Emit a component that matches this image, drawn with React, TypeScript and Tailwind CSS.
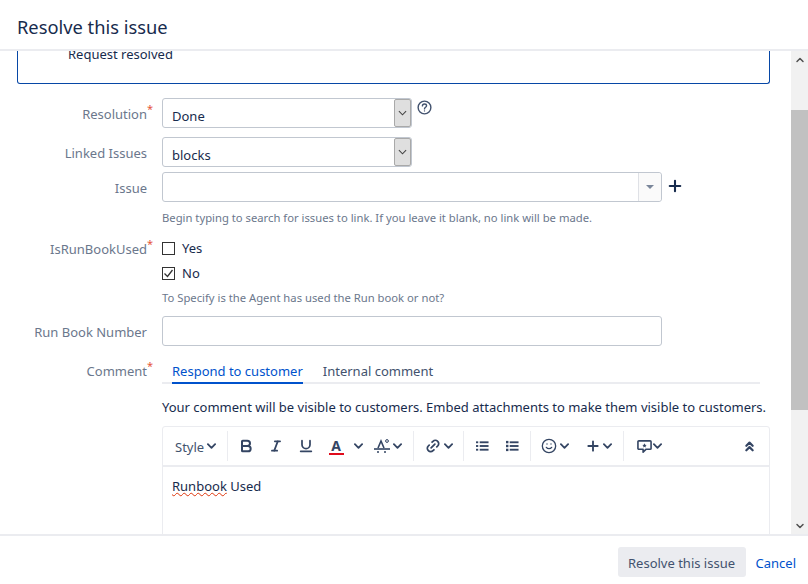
import React from "react";
import { Bold, Italic, Underline, Link2, Smile, Plus, ChevronDown, ChevronUp } from "lucide-react";

const Chev = ({ className = "" }: { className?: string }) => (
  <svg viewBox="0 0 10 6" className={"w-[9px] h-[6px] shrink-0 " + className} fill="none" stroke="#344563" strokeWidth="2" strokeLinecap="round" strokeLinejoin="round">
    <path d="M1 1l4 4 4-4" />
  </svg>
);
const Sep = ({ className = "" }: { className?: string }) => <div className={"w-[1px] h-[30px] bg-[#ebecf0] shrink-0 " + className} />;

const Label = ({ children, req, top = "" }: { children: React.ReactNode; req?: boolean; top?: string }) => (
  <div className={"w-[130px] shrink-0 text-right text-[13px] leading-[20px] text-[#6b778c] " + top}>
    <div className="relative">
      {children}
      {req && <span className="absolute right-[-6px] top-[-5px] text-[#e5553a] text-[11px]">*</span>}
    </div>
  </div>
);

const SelectBox = ({ value }: { value: string }) => (
  <div className="w-[250px] h-[30px] border border-[#c1c7d0] rounded-[3px] flex items-stretch bg-white">
    <div className="flex-1 pl-[9px] pt-[7px] text-[13px] leading-[20px] text-[#172b4d]">{value}</div>
    <div className="w-[17px] bg-[#dfdfdf] border border-[#a9a9a9] rounded-[2px] flex items-center justify-center">
      <svg viewBox="0 0 10 6" className="w-[9px] h-[6px]" fill="none" stroke="#444" strokeWidth="1.2"><path d="M1 1l4 4 4-4" /></svg>
    </div>
  </div>
);

export default function App() {
  return (
    <div className="w-[808px] h-[584px] bg-white flex flex-col overflow-hidden font-['Noto_Sans','Open_Sans',sans-serif] text-[#172b4d]">
      <div className="h-[51px] shrink-0 border-b-2 border-[#ebecf0] pl-[17px] pt-[13px] text-[18.3px] leading-[28px] text-[#172b4d]">Resolve this issue</div>

      <div className="flex-1 flex min-h-0">
        <div className="flex-1 overflow-hidden pl-[17px] pr-[21px]">
          <div className="h-[33px] flex border border-t-0 border-[#0747a6] rounded-b-[3px] pl-[50px] text-[13px]">
            <div className="leading-[18px] mt-[-6px]">Request resolved</div>
          </div>

          <div className="flex mt-[14px]">
            <Label req top="pt-[6px]">Resolution</Label>
            <div className="ml-[15px]"><SelectBox value="Done" /></div>
            <svg viewBox="0 0 16 16" className="w-[15px] h-[15px] ml-[5px] mt-[2px]" fill="none" stroke="#42526e" strokeWidth="1.5">
              <circle cx="8" cy="8" r="6.8" />
              <path d="M5.8 6.3c0-1.3 1-2 2.2-2s2.2.8 2.2 1.9c0 1.6-2.2 1.6-2.2 3.3" strokeLinecap="round" />
              <circle cx="8" cy="11.6" r=".7" fill="#42526e" stroke="none" />
            </svg>
          </div>

          <div className="flex mt-[9px]">
            <Label top="pt-[6px]">Linked Issues</Label>
            <div className="ml-[15px]"><SelectBox value="blocks" /></div>
          </div>

          <div className="flex mt-[5px]">
            <Label top="pt-[6px]">Issue</Label>
            <div className="ml-[15px] w-[500px] h-[30px] border border-[#c1c7d0] rounded-[3px] flex justify-end">
              <div className="w-[23px] border-l border-[#dfe1e6] bg-[#fafafa] rounded-r-[3px] flex items-center justify-center">
                <svg viewBox="0 0 8 4" className="w-[8px] h-[4px]"><path d="M0 0h8L4 4z" fill="#7a869a" /></svg>
              </div>
            </div>
            <Plus size={18} strokeWidth={2.8} color="#172b4d" className="ml-[4px] mt-[5px]" />
          </div>

          <div className="ml-[145px] mt-[8px] text-[11.25px] leading-[16px] text-[#6b778c]">Begin typing to search for issues to link. If you leave it blank, no link will be made.</div>

          <div className="flex mt-[12px]">
            <Label req top="pt-[1px]">IsRunBookUsed</Label>
            <div className="ml-[15px]">
              <div className="flex items-center h-[20px]">
                <div className="w-[13px] h-[13px] border border-[#333] bg-white" />
                <span className="ml-[7px] text-[13px] leading-[20px]">Yes</span>
              </div>
              <div className="flex items-center h-[20px] mt-[5px]">
                <div className="w-[13px] h-[13px] border border-[#333] bg-white flex items-center justify-center">
                  <svg viewBox="0 0 11 11" className="w-[11px] h-[11px]" fill="none" stroke="#333" strokeWidth="1.3"><path d="M1.5 5.5l3 3 5-6.5" /></svg>
                </div>
                <span className="ml-[7px] text-[13px] leading-[20px]">No</span>
              </div>
              <div className="mt-[7px] text-[11.25px] leading-[16px] text-[#6b778c]">To Specify is the Agent has used the Run book or not?</div>
            </div>
          </div>

          <div className="flex mt-[10px]">
            <Label top="pt-[6px]">Run Book Number</Label>
            <div className="ml-[15px] w-[500px] h-[30px] border border-[#c1c7d0] rounded-[3px]" />
          </div>

          <div className="flex mt-[14px]">
            <Label req top="pt-[1px]">Comment</Label>
            <div className="ml-[15px] flex-1 min-w-0">
              <div className="flex w-[598px] border-b-2 border-[#ebecf0] h-[24px] pl-[10px] pt-[1px]">
                <div className="h-[23px] border-b-2 border-[#0052cc] text-[#0052cc] text-[13px] leading-[20px]">Respond to customer</div>
                <div className="ml-[20px] text-[13px] leading-[20px] text-[#42526e]">Internal comment</div>
              </div>
              <div className="mt-[14px] text-[13px] leading-[18px] text-[#172b4d] whitespace-nowrap">Your comment will be visible to customers. Embed attachments to make them visible to customers.</div>

              <div className="mt-[10px] border border-[#ebecf0] rounded-t-[3px] h-[200px] w-[608px]">
                <div className="h-[40px] border-b-2 border-[#ebecf0] flex items-center text-[#42526e]">
                  <span className="ml-[12px] w-[30px] pt-[1px] text-[13px] leading-[20px] text-[#42526e]">Style</span>
                  <Chev className="ml-[2px]" />
                  <Sep className="ml-[11px]" />
                  <Bold size={16} strokeWidth={3} color="#344563" className="ml-[10px]" />
                  <Italic size={14} strokeWidth={3} color="#344563" className="ml-[15px]" />
                  <Underline size={16} strokeWidth={2.6} color="#344563" className="ml-[15px]" />
                  <div className="ml-[14px] w-[16px] flex flex-col items-center">
                    <span className="text-[14px] leading-[15px] font-bold text-[#344563]">A</span>
                    <div className="w-[15px] h-[2px] bg-[#e00b1c]" />
                  </div>
                  <Chev className="ml-[10px]" />
                  <svg viewBox="0 0 16 16" className="w-[16px] h-[16px] ml-[11px]" fill="none" stroke="#344563" strokeWidth="1.6">
                    <path d="M4 10l3-7 3 7" />
                    <circle cx="13" cy="3" r="1.4" strokeWidth="1" />
                    <path d="M0 11h16" />
                    <path d="M3 14h2M10 14h2" />
                  </svg>
                  <Chev className="ml-[3px]" />
                  <Sep className="ml-[11px]" />
                  <Link2 size={16} strokeWidth={2.6} color="#344563" className="ml-[11px] -rotate-45" />
                  <Chev className="ml-[3px]" />
                  <Sep className="ml-[10px]" />
                  <svg viewBox="0 0 14 12" className="w-[13px] h-[12px] ml-[12px]" fill="#344563">
                    <rect x="0" y="1" width="2.4" height="2" /><rect x="4" y="1" width="9.5" height="2" />
                    <rect x="0" y="5" width="2.4" height="2" /><rect x="4" y="5" width="9.5" height="2" />
                    <rect x="0" y="9" width="2.4" height="2" /><rect x="4" y="9" width="9.5" height="2" />
                  </svg>
                  <svg viewBox="0 0 14 12" className="w-[13px] h-[12px] ml-[17px]" fill="#344563">
                    <rect x="0" y="0.5" width="2.6" height="2.6" /><rect x="4" y="1" width="9.5" height="2" />
                    <rect x="0" y="4.7" width="2.6" height="2.6" /><rect x="4" y="5" width="9.5" height="2" />
                    <rect x="0" y="8.9" width="2.6" height="2.6" /><rect x="4" y="9" width="9.5" height="2" />
                  </svg>
                  <Sep className="ml-[11px]" />
                  <Smile size={16} strokeWidth={2} color="#344563" className="ml-[10px]" />
                  <Chev className="ml-[3px]" />
                  <Plus size={16} strokeWidth={2.8} color="#344563" className="ml-[16px]" />
                  <Chev className="ml-[2px]" />
                  <Sep className="ml-[11px]" />
                  <svg viewBox="0 0 16 16" className="w-[15px] h-[15px] ml-[13px]" fill="none" stroke="#344563" strokeWidth="1.7" strokeLinejoin="round">
                    <path d="M2 2h12a1 1 0 0 1 1 1v7a1 1 0 0 1-1 1H9.5L6.5 14v-3H2a1 1 0 0 1-1-1V3a1 1 0 0 1 1-1z" />
                    <path d="M8 4.6l.7 1.5 1.6.2-1.2 1.1.3 1.6L8 8.2 6.6 9l.3-1.6-1.2-1.1 1.6-.2z" fill="#344563" stroke="none" />
                  </svg>
                  <Chev className="ml-[1px]" />
                  <svg viewBox="0 0 10 12" className="w-[9px] h-[11px] ml-[83px]" fill="none" stroke="#344563" strokeWidth="2.4" strokeLinecap="round" strokeLinejoin="round">
                    <path d="M1.5 5.2L5 1.7l3.5 3.5M1.5 10.2L5 6.7l3.5 3.5" />
                  </svg>
                </div>
                <div className="pl-[9px] pt-[9px] text-[13px] leading-[20px] text-[#172b4d]">
                  <span className="underline decoration-wavy decoration-[#de350b] decoration-1">Runbook</span> Used
                </div>
              </div>
            </div>
          </div>
        </div>

        <div className="w-[17px] shrink-0 bg-[#f1f1f1] flex flex-col items-center">
          <div className="h-[17px] flex items-center justify-center shrink-0"><ChevronUp size={12} strokeWidth={3} color="#505050" /></div>
          <div className="h-[42px] shrink-0" />
          <div className="w-[17px] h-[300px] bg-[#c1c1c1] shrink-0" />
          <div className="flex-1" />
          <div className="h-[17px] flex items-center justify-center shrink-0"><ChevronDown size={12} strokeWidth={3} color="#505050" /></div>
        </div>
      </div>

      <div className="h-[50px] shrink-0 border-t-2 border-[#ebecf0] flex items-start justify-end pt-[11px] pr-[12px]">
        <div className="w-[128px] h-[30px] bg-[#ebecf0] rounded-[3px] text-center text-[13px] leading-[32px] text-[#42526e]">Resolve this issue</div>
        <div className="ml-[10px] text-[13px] leading-[32px] text-[#0052cc]">Cancel</div>
      </div>
    </div>
  );
}
